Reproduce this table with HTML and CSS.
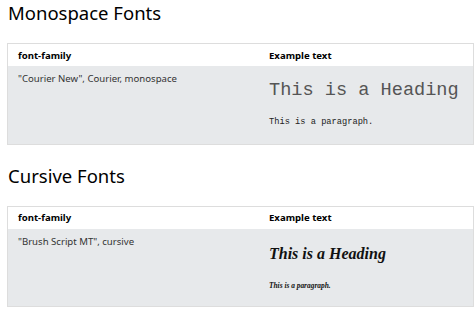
FILE: index.html
```html
<!DOCTYPE html>
<html lang="en">
<head>
    <meta charset="UTF-8">
    <title>Font examples</title>
    <link rel="stylesheet" href="styles.css">
</head>
<body>
    <section class="font-group">
        <h2 class="group-title">Monospace Fonts</h2>
        <table class="font-table">
            <tr>
                <th class="name-col">font-family</th>
                <th>Example text</th>
            </tr>
            <tr class="sample-row">
                <td>"Courier New", Courier, monospace</td>
                <td class="sample mono">
                    <h3>This is a Heading</h3>
                    <p>This is a paragraph.</p>
                </td>
            </tr>
        </table>
    </section>
    <section class="font-group">
        <h2 class="group-title">Cursive Fonts</h2>
        <table class="font-table">
            <tr>
                <th class="name-col">font-family</th>
                <th>Example text</th>
            </tr>
            <tr class="sample-row">
                <td>"Brush Script MT", cursive</td>
                <td class="sample cursive">
                    <h3>This is a Heading</h3>
                    <p>This is a paragraph.</p>
                </td>
            </tr>
        </table>
    </section>
</body>
</html>
```

FILE: styles.css
```css
* {
    font-family: 'Noto Sans', sans-serif;
}

body {
    margin: 0;
    padding: 0 0 0 7px;
    color: #000;
}

.font-group {
    margin-bottom: 18px;
}

.group-title {
    font-size: 18.5px;
    font-weight: 400;
    margin: 0 0 0 1px;
    height: 43px;
    line-height: 26px;
}

.font-table {
    border-collapse: collapse;
    width: 467px;
    border: 1px solid #ddd;
    font-size: 9.6px;
}

.font-table th {
    text-align: left;
    font-weight: 700;
    padding: 0 10px;
    height: 22px;
}

.font-table .name-col {
    width: 231px;
}

.font-table td {
    vertical-align: top;
    padding: 6px 10px;
    color: #333;
}

.sample-row {
    background-color: #e7e9eb;
    height: 78px;
}

.sample h3 {
    margin: 7px 0 0;
    font-weight: 400;
    font-size: 18.6px;
    line-height: 24px;
    color: #555;
}

.sample p {
    margin: 14px 0 0;
    font-size: 8.7px;
    color: #222;
}

.mono h3, .mono p {
    font-family: 'Liberation Mono', 'Courier New', monospace;
}

.cursive h3, .cursive p {
    font-family: 'Liberation Serif', cursive;
    font-style: italic;
    font-weight: 700;
    color: #111;
}

.cursive h3 {
    font-size: 16px;
    margin-top: 7px;
}

.cursive p {
    font-size: 7.4px;
    margin-top: 15px;
}
```
